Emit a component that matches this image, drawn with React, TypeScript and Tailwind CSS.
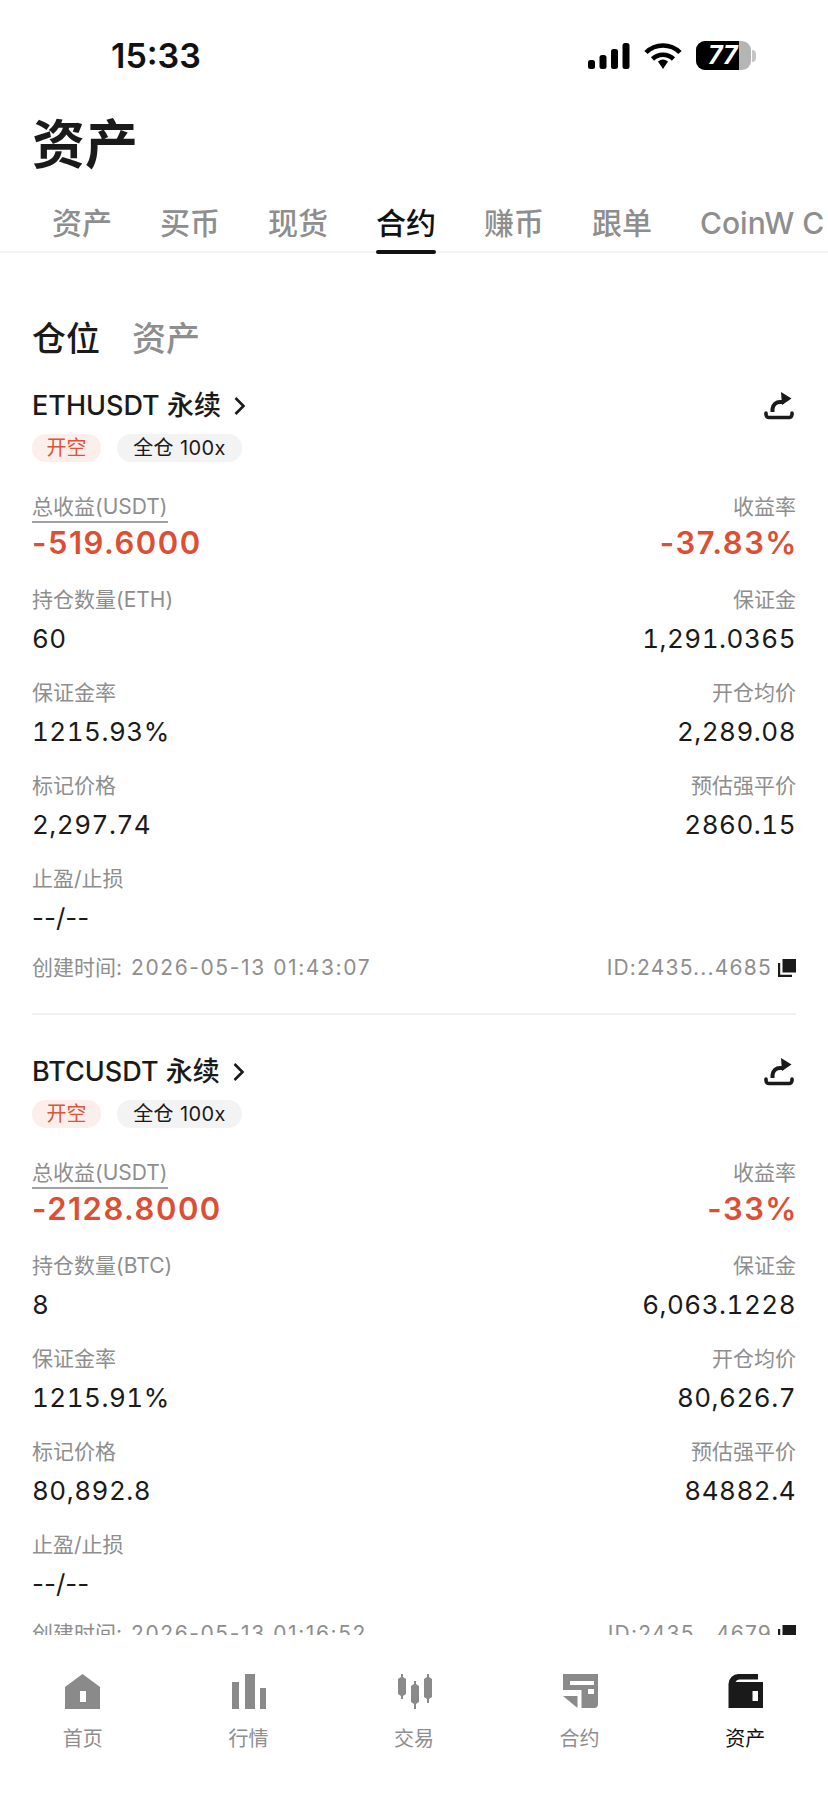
const CJK = { fontFamily: 'Inter, "Noto Sans CJK SC", sans-serif' };

type Pos = {
  symbol: string;
  coin: string;
  pnl: string;
  rate: string;
  qty: string;
  margin: string;
  marginRate: string;
  open: string;
  mark: string;
  liq: string;
  time: string;
  id: string;
};

const positions: Pos[] = [
  { symbol: 'ETHUSDT', coin: 'ETH', pnl: '-519.6000', rate: '-37.83%', qty: '60', margin: '1,291.0365', marginRate: '1215.93%', open: '2,289.08', mark: '2,297.74', liq: '2860.15', time: '2026-05-13 01:43:07', id: 'ID:2435...4685' },
  { symbol: 'BTCUSDT', coin: 'BTC', pnl: '-2128.8000', rate: '-33%', qty: '8', margin: '6,063.1228', marginRate: '1215.91%', open: '80,626.7', mark: '80,892.8', liq: '84882.4', time: '2026-05-13 01:16:52', id: 'ID:2435...4679' },
];

const tabs = ['资产', '买币', '现货', '合约', '赚币', '跟单', 'CoinW C'];

const ShareIcon = () => (
  <svg className="mt-[2px] mr-[2px]" width="30" height="30" viewBox="0 0 30 30" fill="none">
    <path d="M2 21v1.5a3 3 0 0 0 3 3h20a3 3 0 0 0 3-3V21" stroke="#1a1a1a" strokeWidth="3.6" strokeLinecap="round" />
    <path d="M8.5 20v-3a7.5 7.5 0 0 1 8-7H20" stroke="#1a1a1a" strokeWidth="4" />
    <path d="M17 0L27.5 6.5 18 13z" fill="#1a1a1a" />
  </svg>
);

const CopyIcon = () => (
  <svg width="18" height="18" viewBox="0 0 18 18" fill="#1a1a1a">
    <rect x="4.5" y="0" width="13.5" height="13.5" />
    <path d="M0 4h2.2v11.8H14V18H0z" />
  </svg>
);

const Row = ({ l, v, r, w }: { l: string; v: string; r: string; w: string }) => (
  <div className="flex justify-between">
    <div>
      <div className="text-[21px] leading-[28px] text-[#8e8e8e]">{l}</div>
      {v === '--/--' ? (
        <div className="mt-[11px] text-[26px] leading-[28px] text-[#1a1a1a]">{v}</div>
      ) : (
        <div className="mt-[11px] text-[26px] leading-[28px] tracking-[0.5px] tabular-nums text-[#1a1a1a]">{v}</div>
      )}
    </div>
    <div className="text-right">
      <div className="text-[21px] leading-[28px] text-[#8e8e8e]">{r}</div>
      <div className="mt-[11px] text-[26px] leading-[28px] tracking-[0.5px] tabular-nums text-[#1a1a1a]">{w}</div>
    </div>
  </div>
);

const Card = ({ p }: { p: Pos }) => (
  <div className="h-[655px] mb-[11px] pt-[31px] border-b-2 border-[#f1f1f1] mx-8">
    <div className="flex items-center justify-between h-[30px]">
      <div className="flex items-center">
        <span className="text-[27px] leading-[30px] font-medium text-[#1a1a1a]">{p.symbol} 永续</span>
        <svg className="ml-3" width="14" height="20" viewBox="0 0 14 20" fill="none">
          <path d="M2.5 2l8 8-8 8" stroke="#1a1a1a" strokeWidth="2.6" />
        </svg>
      </div>
      <ShareIcon />
    </div>
    <div className="mt-[13px] flex gap-4">
      <span className="w-[69px] h-[28px] rounded-full bg-[#fbeeeb] text-[#d9563c] text-[20px] leading-[28px] text-center">开空</span>
      <span className="w-[125px] h-[28px] rounded-full bg-[#f3f3f3] text-[#1a1a1a] text-[20px] leading-[28px] tracking-[0.4px] text-center">全仓 100x</span>
    </div>
    <div className="mt-[31px] flex justify-between">
      <div>
        <div className="inline-block text-[21px] leading-[28px] text-[#8e8e8e] border-b-2 border-[#a0a0a0]">总收益(USDT)</div>
        <div className="text-[31px] leading-[40px] tracking-[1.5px] font-semibold text-[#dc4f33]">{p.pnl}</div>
      </div>
      <div className="text-right">
        <div className="text-[21px] leading-[28px] text-[#8e8e8e]">收益率</div>
        <div className="mt-[2px] -mr-[2px] text-[31px] leading-[40px] tracking-[1.5px] font-semibold text-[#dc4f33]">{p.rate}</div>
      </div>
    </div>
    <div className="mt-[23px] flex flex-col gap-[26px]">
      <Row l={`持仓数量(${p.coin})`} v={p.qty} r="保证金" w={p.margin} />
      <Row l="保证金率" v={p.marginRate} r="开仓均价" w={p.open} />
      <Row l="标记价格" v={p.mark} r="预估强平价" w={p.liq} />
      <Row l="止盈/止损" v="--/--" r="" w="" />
    </div>
    <div className="mt-[22px] flex justify-between items-center">
      <span className="text-[21px] leading-[28px] text-[#8e8e8e]">
        创建时间: <span className="ml-[3px] tracking-[1.6px]">{p.time}</span>
      </span>
      <span className="flex items-center gap-[6px] text-[21px] leading-[28px] tracking-[1.2px] text-[#8e8e8e]">
        {p.id}
        <CopyIcon />
      </span>
    </div>
  </div>
);

const navItems = [
  {
    label: '首页',
    icon: (
      <svg width="36" height="36" viewBox="0 0 36 36">
        <path fillRule="evenodd" d="M17.5 0L35 13V35H0V13zM15 17v11h6V17z" fill="#8a8a8a" />
      </svg>
    ),
  },
  {
    label: '行情',
    icon: (
      <svg width="36" height="36" viewBox="0 0 36 36" fill="#8a8a8a">
        <rect x="2" y="8" width="7" height="27" />
        <rect x="15" y="0" width="10" height="35" />
        <rect x="30" y="14" width="7" height="21" />
      </svg>
    ),
  },
  {
    label: '交易',
    icon: (
      <svg width="36" height="36" viewBox="0 0 36 36" fill="#8a8a8a">
        <path d="M5 0h2v3l3 2v15l-3 2v3H5v-3l-3-2V5l3-2z" />
        <path d="M18 7h2v3l3 2v16l-3 2v5h-2v-5l-3-2V12l3-2z" />
        <path d="M31 0h2v3l3 2v18l-3 2v4h-2v-4l-3-2V5l3-2z" />
      </svg>
    ),
  },
  {
    label: '合约',
    icon: (
      <svg width="36" height="36" viewBox="0 0 36 36">
        <path fillRule="evenodd" d="M1 0H36V30a4 4 0 0 1-4 4H19.5V16H1zM8 7v4h24V7zM26 15v5h6v-5z" fill="#8a8a8a" />
        <path d="M1 22H15.5V34z" fill="#8a8a8a" />
      </svg>
    ),
  },
  {
    label: '资产',
    active: true,
    icon: (
      <svg width="36" height="36" viewBox="0 0 36 36">
        <path fillRule="evenodd" d="M1.5 10a10 10 0 0 1 10-10H31V5.5H12a4 4 0 0 0-3.5 2.5H36V34H1.5zM25.5 17v10H31V17z" fill="#1a1a1a" />
      </svg>
    ),
  },
];

export default function App() {
  return (
    <div className="relative w-[828px] h-[1795px] overflow-hidden bg-white flex flex-col" style={CJK}>
      <div className="h-[85px] shrink-0 relative">
        <span className="absolute left-[111px] top-[36px] text-[34px] leading-[40px] font-semibold text-[#111]">15:33</span>
        <div className="absolute left-[588px] top-[41px] flex items-center gap-[14px]">
          <svg width="42" height="28" viewBox="0 0 42 28" fill="#000">
            <rect x="0" y="18" width="7" height="9" rx="2.5" />
            <rect x="11.5" y="13" width="7" height="14" rx="2.5" />
            <rect x="23" y="7" width="7" height="20" rx="2.5" />
            <rect x="34.5" y="1" width="7" height="26" rx="2.5" />
          </svg>
          <svg width="38" height="28" viewBox="0 0 38 28" fill="none" stroke="#000" strokeWidth="4.6">
            <path d="M2 10.5a24 24 0 0 1 34 0" />
            <path d="M8.5 17a15 15 0 0 1 21 0" />
            <path d="M14 19.5L19 27l5-7.5a8 8 0 0 0-10 0z" fill="#000" stroke="none" />
          </svg>
          <div className="relative w-[55px] h-[29px] rounded-[9px] bg-[#b5b5b5] overflow-hidden">
            <div className="absolute inset-y-0 left-0 w-[43px] bg-black" />
            <span className="absolute left-[12px] top-0 text-[25px] leading-[29px] font-bold italic text-white">77</span>
          </div>
        </div>
        <div className="absolute left-[752px] top-[50px] w-[4px] h-[12px] rounded-r-full bg-[#c5c5c5]" />
      </div>

      <div className="h-[168px] shrink-0 relative border-b-2 border-[#f3f3f3]">
        <h1 className="absolute left-8 top-[29px] text-[53px] leading-[62px] font-semibold text-[#1a1a1a]">资产</h1>
        <div className="absolute left-[52px] top-[118px] flex gap-[48px] whitespace-nowrap">
          {tabs.map((t) => (
            <div key={t} className={`relative text-[30px] leading-[40px] font-medium ${t === '合约' ? 'text-[#111]' : 'text-[#8e8e8e]'}`}>
              {t}
              {t === '合约' && <div className="absolute left-0 right-0 top-[47px] h-[4px] rounded-full bg-[#111]" />}
            </div>
          ))}
        </div>
      </div>

      <div className="flex-1 min-h-0 overflow-hidden">
        <div className="mx-8 mt-[65px] flex gap-8 text-[34px] leading-[42px] font-medium">
          <span className="text-[#1a1a1a]">仓位</span>
          <span className="text-[#8e8e8e]">资产</span>
        </div>
        {positions.map((p) => (
          <Card key={p.id} p={p} />
        ))}
      </div>

      <div className="h-[160px] shrink-0 bg-white flex pt-[39px]">
        {navItems.map((n) => (
          <div key={n.label} className="flex-1 flex flex-col items-center">
            {n.icon}
            <span className={`mt-[15px] text-[20px] leading-[28px] ${n.active ? 'text-[#111]' : 'text-[#8e8e8e]'}`}>{n.label}</span>
          </div>
        ))}
      </div>
    </div>
  );
}
